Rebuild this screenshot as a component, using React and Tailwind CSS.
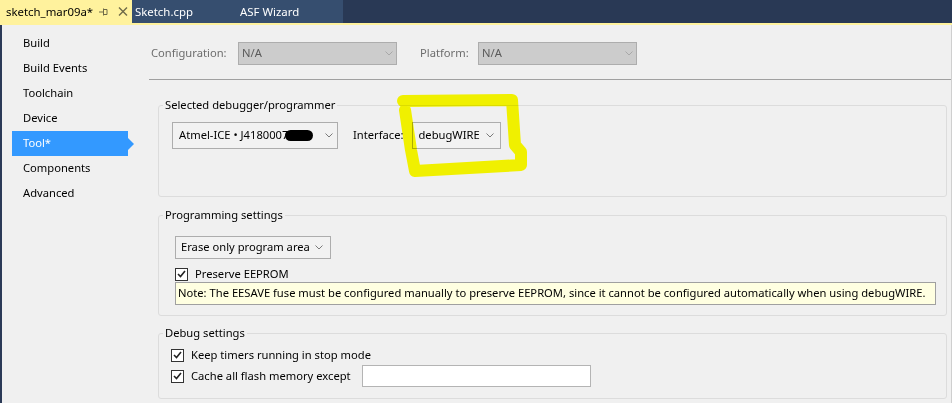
import React from "react";

const font = { fontFamily: '"Noto Sans", "Open Sans", sans-serif' };

function Chevron({ color = "#7a7a7a" }) {
  return (
    <svg width="8" height="5" viewBox="0 0 8 5" className="shrink-0">
      <path d="M0.5 0.5 L4 4 L7.5 0.5" fill="none" stroke={color} strokeWidth="1" />
    </svg>
  );
}

function Check() {
  return (
    <span className="w-[13px] h-[13px] bg-white border border-[#333333] flex items-center justify-center shrink-0">
      <svg width="9" height="8" viewBox="0 0 9 8">
        <path d="M1 4 L3.5 6.5 L8 1" fill="none" stroke="#222" strokeWidth="1.6" />
      </svg>
    </span>
  );
}

const menu = ["Build", "Build Events", "Toolchain", "Device", "Tool*", "Components", "Advanced"];

export default function App() {
  return (
    <div className="w-[952px] h-[403px] overflow-hidden bg-[#f0f0f0] relative text-[11.2px] text-black flex flex-col whitespace-nowrap" style={font}>
      {/* tab well */}
      <div className="h-[23px] bg-[#293955] flex shrink-0">
        <div className="w-[132px] bg-[#fff29d] flex items-center pl-[6px]">
          <span className="text-[11.4px] w-[87px]">sketch_mar09a*</span>
          <svg width="9" height="8" viewBox="0 0 9 8" className="ml-[6px]">
            <path d="M0 4 H4.5 M4.5 0.5 V7.5 M4.5 1.5 H8 V6.5 H4.5" fill="none" stroke="#6e6a48" strokeWidth="1" />
          </svg>
          <svg width="10" height="9" viewBox="0 0 10 9" className="ml-[10px]">
            <path d="M1 0.5 L9 8.5 M9 0.5 L1 8.5" fill="none" stroke="#6e6a48" strokeWidth="1.4" />
          </svg>
        </div>
        <div className="w-[211px] bg-[#364e6f] flex items-center text-white text-[11.4px]">
          <span className="pl-[3px] w-[108px]">Sketch.cpp</span>
          <span>ASF Wizard</span>
        </div>
      </div>
      <div className="h-[2px] bg-[#fff29d] shrink-0" />

      <div className="flex flex-1 border-l-2 border-[#2b3a57]">
        {/* sidebar */}
        <div className="w-[148px] pt-[6px] shrink-0">
          {menu.map((m) =>
            m === "Tool*" ? (
              <div key={m} className="relative ml-[10px] w-[116px] h-[25px] bg-[#3399ff] text-white flex items-center pl-[11px]">
                {m}
                <span className="absolute right-[-6px] top-[7px] w-0 h-0 border-y-[6px] border-y-transparent border-l-[6px] border-l-[#3399ff]" />
              </div>
            ) : (
              <div key={m} className="ml-[10px] h-[25px] flex items-center pl-[11px]">
                {m}
              </div>
            )
          )}
        </div>

        {/* main */}
        <div className="flex-1 flex flex-col border-r border-[#cfcfcf]">
          <div className="mt-[17px] flex items-center h-[23px] pl-[1px] text-[#6d6d6d]">
            <span className="w-[87px]">Configuration:</span>
            <div className="w-[159px] h-[23px] bg-[#cccccc] border border-[#adadad] flex items-center justify-between px-[3px] text-[#5a5a5a]">
              N/A <Chevron color="#a8a8a8" />
            </div>
            <span className="ml-[23px] w-[58px]">Platform:</span>
            <div className="w-[159px] h-[23px] bg-[#cccccc] border border-[#adadad] flex items-center justify-between px-[3px] text-[#5a5a5a]">
              N/A <Chevron color="#a8a8a8" />
            </div>
          </div>
          <div className="mt-[14px] ml-[-1px] border-t border-[#a0a0a0]" />

          {/* group 1 */}
          <fieldset className="mt-[17px] ml-[8px] w-[789px] border border-[#dcdcdc] rounded-[3px] pl-[13px] pt-[9px] pb-[47px]">
            <legend className="ml-[-9px] px-[2px] leading-[16px]">Selected debugger/programmer</legend>
            <div className="flex items-center">
              <div className="w-[166px] h-[27px] bg-[#f2f2f2] border border-[#adadad] flex items-center pl-[6px] pr-[4px]">
                <span>Atmel-ICE • J4180007</span>
                <span className="w-[28px] h-[11px] bg-black rounded-full ml-[-3px]" />
                <span className="ml-auto">
                  <Chevron />
                </span>
              </div>
              <span className="ml-[15px]">Interface:</span>
              <div className="ml-[9px] w-[89px] h-[27px] bg-[#f2f2f2] border border-[#adadad] flex items-center pl-[5px] pr-[6px] justify-between">
                debugWIRE <Chevron />
              </div>
            </div>
          </fieldset>

          {/* group 2 */}
          <fieldset className="mt-[10px] ml-[8px] w-[789px] border border-[#dcdcdc] rounded-[3px] pl-[16px] pr-[10px] pt-[13px] pb-[10px]">
            <legend className="ml-[-12px] px-[2px] leading-[16px]">Programming settings</legend>
            <div className="w-[156px] h-[23px] bg-[#f2f2f2] border border-[#adadad] flex items-center pl-[5px] pr-[7px] justify-between">
              Erase only program area <Chevron />
            </div>
            <div className="mt-[8px] flex items-center gap-[7px] h-[14px]">
              <Check />
              <span>Preserve EEPROM</span>
            </div>
            <div className="mt-[1px] w-[761px] h-[23px] bg-[#ffffe1] border border-[#a0a0a0] flex items-center pl-[2px]">
              Note: The EESAVE fuse must be configured manually to preserve EEPROM, since it cannot be configured automatically when using debugWIRE.
            </div>
          </fieldset>

          {/* group 3 */}
          <fieldset className="mt-[9px] ml-[8px] w-[789px] border border-[#dcdcdc] rounded-[3px] pl-[12px] pt-[4px] pb-[11px]">
            <legend className="ml-[-8px] px-[2px] leading-[16px]">Debug settings</legend>
            <div className="flex items-center gap-[7px] h-[20px]">
              <Check />
              <span>Keep timers running in stop mode</span>
            </div>
            <div className="flex items-center gap-[7px] h-[22px]">
              <Check />
              <span>Cache all flash memory except</span>
              <div className="ml-[4px] w-[229px] h-[22px] bg-white border border-[#b4b4b4]" />
            </div>
          </fieldset>
        </div>
      </div>

      {/* yellow marker annotation */}
      <svg className="absolute left-0 top-0 pointer-events-none mix-blend-multiply" width="952" height="403">
        <path
          d="M403 101 L512 100 L515 145 L521 152 L521 165 L415 171 L411 150 L405 110"
          fill="none"
          stroke="#ffff00"
          strokeWidth="12"
          strokeLinejoin="round"
          strokeLinecap="round"
        />
      </svg>
    </div>
  );
}
